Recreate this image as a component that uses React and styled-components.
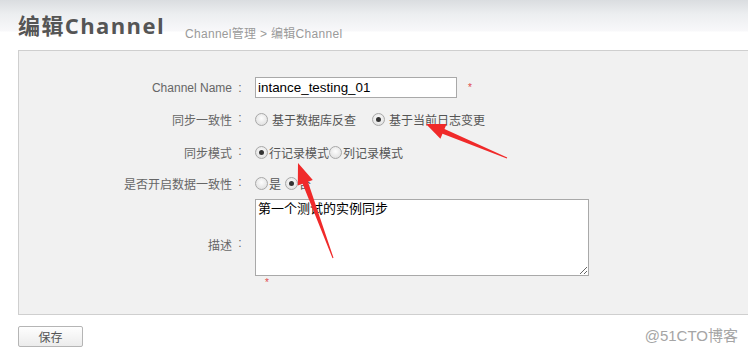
import styled, { createGlobalStyle } from "styled-components";

const GlobalStyle = createGlobalStyle`
  html, body {
    margin: 0;
    padding: 0;
    background: #fff;
    overflow: hidden;
  }
  body {
    font-family: "Liberation Sans", "Noto Sans CJK SC", sans-serif;
  }
`;

const syncOptions = [
  { label: "基于数据库反查", checked: false },
  { label: "基于当前日志变更", checked: true },
];

const modeOptions = [
  { label: "行记录模式", checked: true },
  { label: "列记录模式", checked: false },
];

const checkOptions = [
  { label: "是", checked: false },
  { label: "否", checked: true },
];

// arrow polygon: thin tail, widening shaft, triangular head
function arrowPoints(tail, tip, headLen, headHalf, neckHalf) {
  const dx = tip[0] - tail[0];
  const dy = tip[1] - tail[1];
  const len = Math.hypot(dx, dy);
  const ux = dx / len;
  const uy = dy / len;
  const nx = -uy;
  const ny = ux;
  const bx = tip[0] - ux * headLen;
  const by = tip[1] - uy * headLen;
  const pts = [
    [tail[0] + nx * 0.5, tail[1] + ny * 0.5],
    [bx + nx * neckHalf, by + ny * neckHalf],
    [bx + nx * headHalf, by + ny * headHalf],
    tip,
    [bx - nx * headHalf, by - ny * headHalf],
    [bx - nx * neckHalf, by - ny * neckHalf],
    [tail[0] - nx * 0.5, tail[1] - ny * 0.5],
  ];
  return pts.map((p) => p.map((v) => v.toFixed(1)).join(",")).join(" ");
}

function App() {
  return (
    <Page>
      <GlobalStyle />
      <Header>
        <Title>编辑Channel</Title>
        <Crumbs>Channel管理 &gt; 编辑Channel</Crumbs>
      </Header>

      <Panel>
        <Row>
          <Label>
            Channel Name<Colon>:</Colon>
          </Label>
          <Field>
            <TextInput defaultValue="intance_testing_01" />
            <Star $ml={11}>*</Star>
          </Field>
        </Row>

        <Row $mt={11}>
          <Label>
            同步一致性<Colon>:</Colon>
          </Label>
          <Field>
            {syncOptions.map((o, i) => (
              <Option key={o.label} $ml={i ? 16 : 0} $gap={4}>
                <Radio $checked={o.checked} />
                {o.label}
              </Option>
            ))}
          </Field>
        </Row>

        <Row $mt={12}>
          <Label>
            同步模式<Colon>:</Colon>
          </Label>
          <Field>
            {modeOptions.map((o) => (
              <Option key={o.label} $gap={1}>
                <Radio $checked={o.checked} />
                {o.label}
              </Option>
            ))}
          </Field>
        </Row>

        <Row $mt={10}>
          <Label>
            是否开启数据一致性<Colon>:</Colon>
          </Label>
          <Field>
            {checkOptions.map((o, i) => (
              <Option key={o.label} $ml={i ? 4 : 0} $gap={1}>
                <Radio $checked={o.checked} />
                {o.label}
              </Option>
            ))}
          </Field>
        </Row>

        <Row $mt={5}>
          <Label>
            描述<Colon>:</Colon>
          </Label>
          <FieldColumn>
            <TextArea defaultValue="第一个测试的实例同步" />
            <Star $ml={10}>*</Star>
          </FieldColumn>
        </Row>
      </Panel>

      <Footer>
        <SaveButton>保存</SaveButton>
      </Footer>

      <Watermark>@51CTO博客</Watermark>

      <Arrows width="748" height="352" viewBox="0 0 748 352">
        <polygon
          fill="#f02a2a"
          points={arrowPoints([507, 158], [426, 124], 19, 8, 2.6)}
        />
        <polygon
          fill="#f02a2a"
          points={arrowPoints([333, 258], [298, 163], 21, 8, 2.8)}
        />
      </Arrows>
    </Page>
  );
}

const Page = styled.div`
  position: relative;
  width: 748px;
  height: 352px;
  overflow: hidden;
`;

const Header = styled.div`
  height: 50px;
  display: flex;
  align-items: baseline;
  padding: 3px 0 0 18px;
  box-sizing: border-box;
  background: linear-gradient(#dadde0 0, #eceef0 14px, #f8f8fa 31px, #fff 32px, #fff);
`;

const Title = styled.div`
  font-family: "Open Sans", "Noto Sans CJK SC", sans-serif;
  font-size: 22px;
  font-weight: bold;
  color: #555;
  line-height: 44px;
  letter-spacing: 1.4px;
`;

const Crumbs = styled.div`
  margin-left: 20px;
  font-size: 12px;
  letter-spacing: 0.3px;
  color: #9a9a9a;
  position: relative;
  top: 4px;
`;

const Panel = styled.div`
  margin-left: 18px;
  width: 760px;
  height: 265px;
  box-sizing: border-box;
  border: 1px solid #cfcfcf;
  background: #f1f1f1;
  padding-top: 26px;
`;

const Row = styled.div`
  display: flex;
  align-items: center;
  margin-top: ${(p) => p.$mt || 0}px;
  min-height: 21px;
`;

const Label = styled.div`
  width: 227px;
  display: flex;
  justify-content: flex-end;
  font-size: 12px;
  color: #666;
  margin-right: 9px;
  white-space: nowrap;
`;

const Colon = styled.span`
  width: 12px;
  margin-left: 2px;
  text-align: center;
`;

const Field = styled.div`
  display: flex;
  align-items: center;
  font-size: 12px;
  color: #555;
`;

const FieldColumn = styled.div`
  display: flex;
  flex-direction: column;
  align-items: flex-start;
`;

const TextInput = styled.input`
  width: 202px;
  height: 21px;
  box-sizing: border-box;
  border: 1px solid #a9a9a9;
  padding: 0 2px;
  font-family: "Liberation Sans", sans-serif;
  font-size: 13.4px;
  color: #000;
  background: #fff;
  outline: none;
`;

const TextArea = styled.textarea`
  width: 334px;
  height: 77px;
  box-sizing: border-box;
  border: 1px solid #a9a9a9;
  padding: 0 2px;
  margin: 0;
  font-family: "Noto Sans CJK SC", sans-serif;
  font-size: 13px;
  line-height: 16px;
  color: #000;
  background: #fff;
  outline: none;
  display: block;
`;

const Star = styled.span`
  color: #e04a4a;
  font-size: 10px;
  margin-left: ${(p) => p.$ml || 0}px;
  line-height: 14px;
`;

const Option = styled.label`
  display: flex;
  align-items: center;
  gap: ${(p) => p.$gap}px;
  margin-left: ${(p) => p.$ml || 0}px;
  font-size: 12px;
  color: #555;
  font-family: "Noto Sans CJK SC", sans-serif;
`;

const Radio = styled.span`
  width: 11px;
  height: 11px;
  border-radius: 50%;
  border: 1px solid #a8a8a8;
  background: radial-gradient(circle at 50% 40%, #fdfdfd 0, #e4e4e4 70%, #d6d6d6 100%);
  display: inline-flex;
  align-items: center;
  justify-content: center;
  &::after {
    content: "";
    width: 5px;
    height: 5px;
    border-radius: 50%;
    background: #333;
    display: ${(p) => (p.$checked ? "block" : "none")};
  }
`;

const Footer = styled.div`
  padding: 11px 0 0 18px;
`;

const SaveButton = styled.button`
  width: 65px;
  height: 21px;
  box-sizing: border-box;
  border: 1px solid #b5b5b5;
  border-radius: 2px;
  background: linear-gradient(#fefefe, #ececec);
  font-family: "Noto Sans CJK SC", sans-serif;
  font-size: 12px;
  color: #555;
  padding: 0;
`;

const Watermark = styled.div`
  position: absolute;
  right: 10px;
  top: 324px;
  font-family: "Liberation Sans", "Noto Sans CJK SC", sans-serif;
  font-size: 15px;
  color: #a5a5a5;
`;

const Arrows = styled.svg`
  position: absolute;
  left: 0;
  top: 0;
  pointer-events: none;
`;

export default App;
